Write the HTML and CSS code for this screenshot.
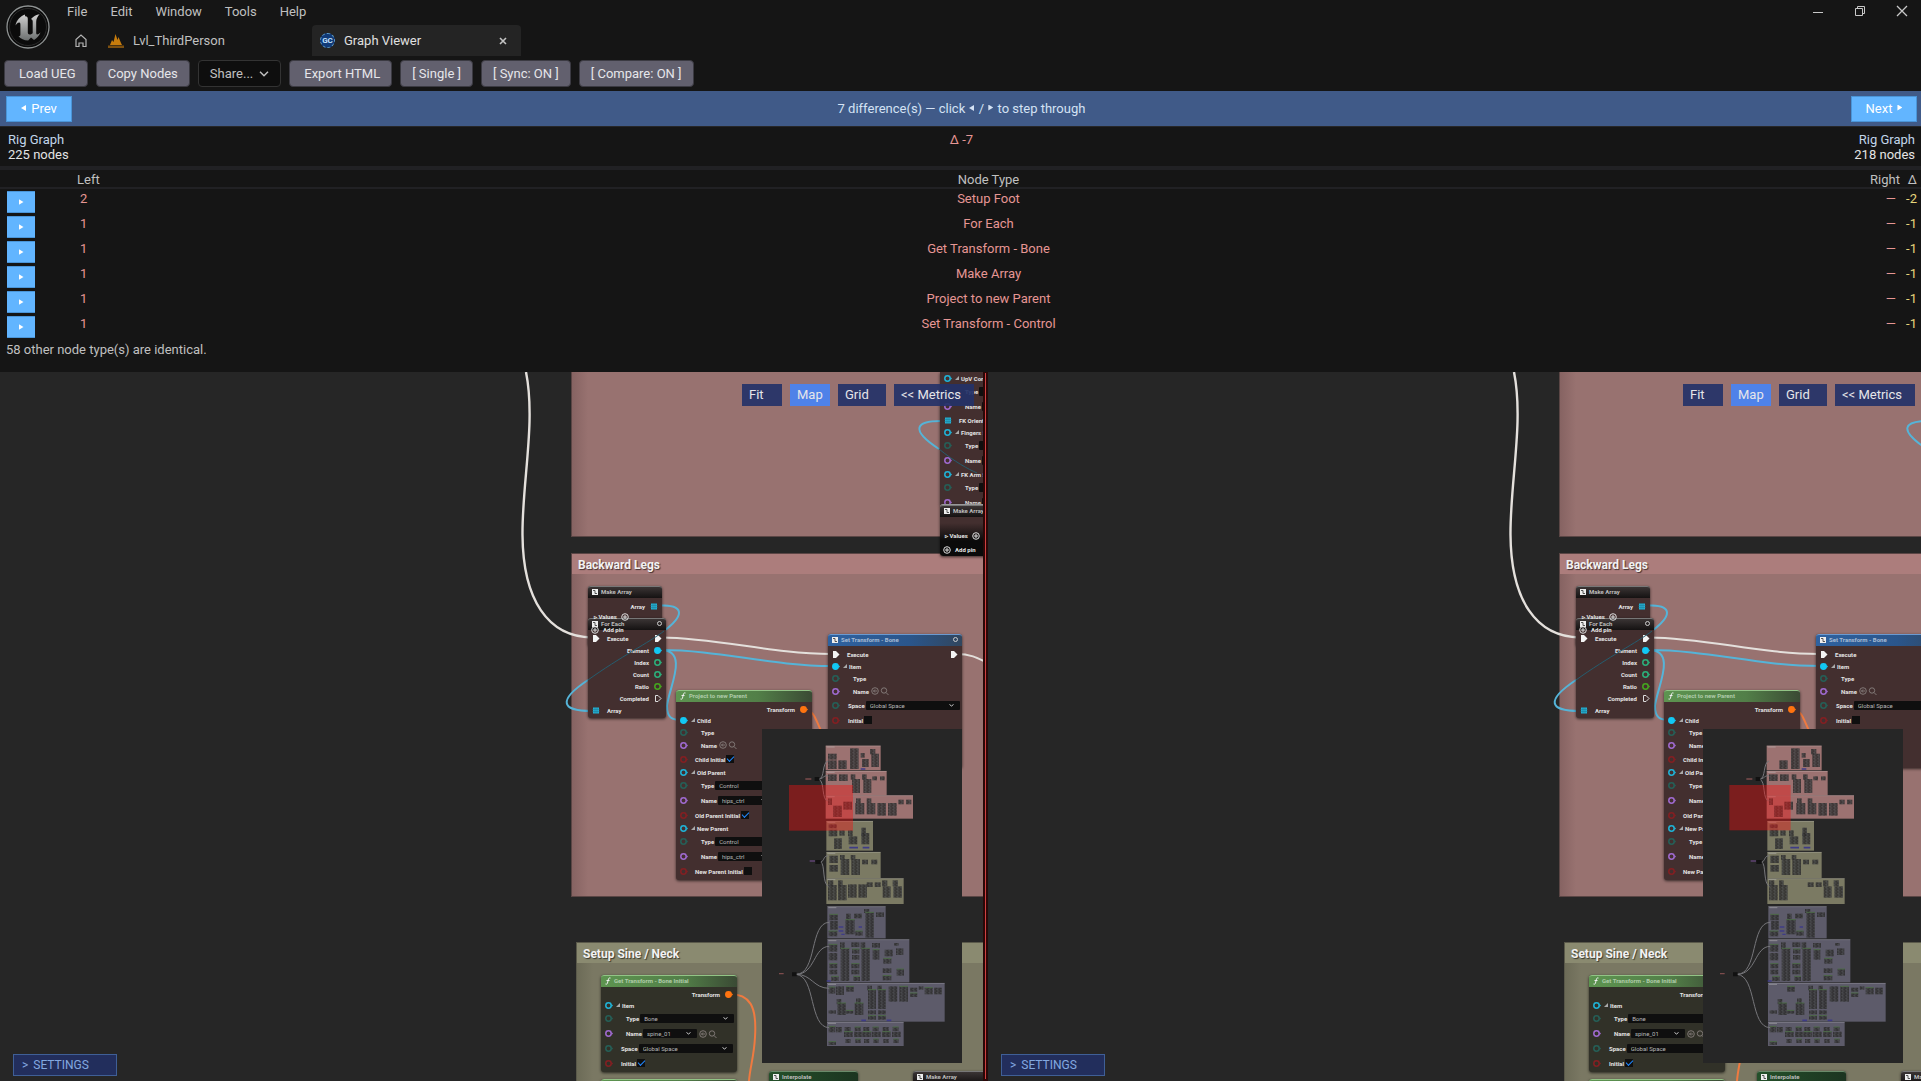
FILE: index.html
```html
<!DOCTYPE html>
<html lang="en">
<head>
<meta charset="utf-8">
<title>Graph Viewer</title>
<link rel="stylesheet" href="styles.css">
</head>
<body>
<header class="titlebar">
  <svg class="logo" viewBox="0 0 44 44" aria-hidden="true">
    <defs><linearGradient id="metal" x1="0" y1="0" x2="0" y2="1"><stop offset="0" stop-color="#d0d0d0"/><stop offset="1" stop-color="#6c7070"/></linearGradient></defs>
    <circle cx="22" cy="22" r="21" fill="#0b0b0b" stroke="#8f9393" stroke-width="1.3"/>
    <circle cx="22" cy="22" r="18.500" fill="none" stroke="#2a2a2a" stroke-width="1"/>
    <path fill="url(#metal)" d="M19 9.500c-5 2-8.500 5.500-9.500 11 1.300-2 2.800-3.200 3.800-3 .9.200 1.100.9 1.100 2.200v9.600c0 1.600-.6 2.100-1.900 1.900 2.200 2.700 5.500 4.200 9.700 4.200l2.800-2.800 3 2.300c3-1.500 5.200-3.900 6.500-7.300-1.600 1.500-2.700 2.100-3.500 1.900-.6-.2-.8-.8-.8-1.700V17c0-2.900 1.200-5.300 3.400-7.700-3.300.6-6.200 2-8.600 4.700 1.200.4 1.700 1.200 1.700 2.600v11.600c-1 .9-1.900 1.300-3 1.300-1.200 0-1.900-.6-1.900-1.900V13.800c0-1.800-.9-2.700-2.800-2.500.1-.6.100-1.200 0-1.800z"/>
  </svg>
  <div class="titlebar-main">
    <nav class="menu" aria-label="Main">
      <button class="menu-item">File</button>
      <button class="menu-item">Edit</button>
      <button class="menu-item">Window</button>
      <button class="menu-item">Tools</button>
      <button class="menu-item">Help</button>
    </nav>
    <div class="tabs">
      <button class="home" aria-label="Home"><svg viewBox="0 0 12 14"><path d="M1 12.500V5.500L6 1l5 4.500v7H8V9H4v3.500z" fill="none" stroke="#b4b4b4" stroke-width="1.200"/></svg></button>
      <button class="tab"><svg class="tab-icon" viewBox="0 0 16 14"><path d="M2 11L4 6l1.500 2L7.500 0l2 6 1-3L13 9l1 2z" fill="#c77c0c"/><path d="M0 11.500h16V14H0z" fill="#7d5010"/></svg><span>Lvl_ThirdPerson</span></button>
      <div class="tab tab--active">
        <span class="gc-badge">GC</span><span>Graph Viewer</span>
        <button class="tab-close" aria-label="Close tab"><svg viewBox="0 0 8 8"><path d="M1 1l6 6M7 1L1 7" stroke="#c4c4c4" stroke-width="1.600"/></svg></button>
      </div>
    </div>
  </div>
  <div class="window-controls">
    <button aria-label="Minimize"><svg viewBox="0 0 12 12"><path d="M1 7.500h10" stroke="#c8c8c8" fill="none"/></svg></button>
    <button aria-label="Restore"><svg viewBox="0 0 12 12"><path d="M1.500 3.500h7v7h-7zM3.500 3.500v-2h7v7h-2" stroke="#c8c8c8" fill="none"/></svg></button>
    <button aria-label="Close"><svg viewBox="0 0 12 12"><path d="M1 1l10 10M11 1L1 11" stroke="#c8c8c8" stroke-width="1.300" fill="none"/></svg></button>
  </div>
</header>

<div class="toolbar">
  <button class="tool tool--wide">Load UEG</button>
  <button class="tool">Copy Nodes</button>
  <button class="tool tool--menu">Share...<svg viewBox="0 0 10 6"><path d="M1 .8l4 4 4-4" fill="none" stroke="#c0c0c0" stroke-width="1.500"/></svg></button>
  <button class="tool tool--wide">Export HTML</button>
  <button class="tool">[ Single ]</button>
  <button class="tool">[ Sync: ON ]</button>
  <button class="tool">[ Compare: ON ]</button>
</div>

<div class="stepper">
  <button class="step"><i class="tri tri--left"></i>Prev</button>
  <p class="step-text">7 difference(s) — click <i class="tri tri--left"></i> / <i class="tri"></i> to step through</p>
  <button class="step step--next">Next<i class="tri"></i></button>
</div>

<section class="summary">
  <div><h2>Rig Graph</h2><p>225 nodes</p></div>
  <p class="delta">Δ -7</p>
  <div class="summary-right"><h2>Rig Graph</h2><p>218 nodes</p></div>
</section>

<section class="diff">
  <table>
    <thead><tr><th class="c-go"></th><th class="c-left">Left</th><th class="c-type">Node Type</th><th class="c-right">Right</th><th class="c-delta">Δ</th></tr></thead>
    <tbody>
      <tr><td class="c-go"><button class="go" aria-label="Go to Setup Foot"><i class="tri"></i></button></td><td class="c-left">2</td><td class="c-type">Setup Foot</td><td class="c-right">—</td><td class="c-delta">-2</td></tr>
      <tr><td class="c-go"><button class="go" aria-label="Go to For Each"><i class="tri"></i></button></td><td class="c-left">1</td><td class="c-type">For Each</td><td class="c-right">—</td><td class="c-delta">-1</td></tr>
      <tr><td class="c-go"><button class="go" aria-label="Go to Get Transform"><i class="tri"></i></button></td><td class="c-left">1</td><td class="c-type">Get Transform - Bone</td><td class="c-right">—</td><td class="c-delta">-1</td></tr>
      <tr><td class="c-go"><button class="go" aria-label="Go to Make Array"><i class="tri"></i></button></td><td class="c-left">1</td><td class="c-type">Make Array</td><td class="c-right">—</td><td class="c-delta">-1</td></tr>
      <tr><td class="c-go"><button class="go" aria-label="Go to Project to new Parent"><i class="tri"></i></button></td><td class="c-left">1</td><td class="c-type">Project to new Parent</td><td class="c-right">—</td><td class="c-delta">-1</td></tr>
      <tr><td class="c-go"><button class="go" aria-label="Go to Set Transform"><i class="tri"></i></button></td><td class="c-left">1</td><td class="c-type">Set Transform - Control</td><td class="c-right">—</td><td class="c-delta">-1</td></tr>
    </tbody>
  </table>
  <p class="diff-note">58 other node type(s) are identical.</p>
</section>

<main class="panes">
  <section class="pane pane--left" data-side="left">
    <div class="graph"></div>
    <div class="pane-actions">
      <button>Fit</button><button class="on">Map</button><button class="grid-btn">Grid</button><button class="metrics">&lt;&lt; Metrics</button>
    </div>
    <div class="minimap"></div>
    <button class="settings"><span>&gt;</span>SETTINGS</button>
  </section>
  <div class="splitter"></div>
  <section class="pane pane--right" data-side="right">
    <div class="graph"></div>
    <div class="pane-actions">
      <button>Fit</button><button class="on">Map</button><button class="grid-btn">Grid</button><button class="metrics">&lt;&lt; Metrics</button>
    </div>
    <div class="minimap"></div>
    <button class="settings"><span>&gt;</span>SETTINGS</button>
  </section>
</main>
<script src="graph.js"></script>
</body>
</html>
```

FILE: styles.css
```css
* { box-sizing: border-box; }
html, body { height: 100%; }
body {
  margin: 0;
  display: flex;
  flex-direction: column;
  overflow: hidden;
  background: #151515;
  color: #c0c0c0;
  font: 13px/16px Roboto, "Liberation Sans", sans-serif;
}
button, select, input { font: inherit; color: inherit; margin: 0; padding: 0; border: 0; border-radius: 0; }
button { background: none; white-space: nowrap; }
h2, p { margin: 0; font-size: 13px; font-weight: 400; }
svg { display: block; }

/* Title bar */
.titlebar { display: flex; height: 56px; flex: none; }
.logo { width: 44px; height: 44px; margin: 5px 0 0 6px; flex: none; }
.titlebar-main { flex: 1; padding-left: 17px; }
.menu { display: flex; gap: 23px; height: 25px; align-items: center; padding-bottom: 2px; }
.tabs { display: flex; height: 31px; }
.home { width: 12px; margin-left: 8px; }
.home svg { width: 12px; height: 14px; }
.tab { display: flex; align-items: center; gap: 9px; width: 204px; margin-left: 21px; text-align: left; }
.tab-icon { width: 16px; height: 14px; }
.tab--active { width: 209px; margin-left: 0; padding: 0 14px 0 8px; background: #242424; color: #e0e0e0; border-radius: 4px 4px 0 0; }
.tab-close { margin-left: auto; }
.tab-close svg { width: 8px; height: 8px; }
.gc-badge { width: 15px; height: 15px; border-radius: 8px; background: #103a78; border: 1px dashed #5d9ed0; color: #c4e4ff; font-size: 8px; line-height: 13px; font-weight: 700; text-align: center; }
.window-controls { display: flex; gap: 30px; padding: 5px 13px 0 0; align-items: flex-start; }
.window-controls svg { width: 12px; height: 12px; }

/* Toolbar */
.toolbar { display: flex; flex: none; gap: 8px; padding: 4px; height: 35px; }
.tool { height: 27px; padding: 0 11px; background: #62606e; border: 1px solid #3b3a42; border-radius: 4px; color: #e6e6ea; }
.tool--wide { padding-left: 14px; }
.tool--menu { display: flex; align-items: center; gap: 6px; background: #0e0e0e; border-color: #333; color: #c0c0c0; }
.tool--menu svg { width: 10px; height: 6px; }

.tri { display: inline-block; width: 5px; height: 6px; background: currentColor; clip-path: polygon(0 0, 100% 50%, 0 100%); vertical-align: 2px; }
.tri--left { transform: rotate(180deg); }

/* Difference stepper */
.stepper { display: flex; flex: none; justify-content: space-between; align-items: center; height: 35px; padding: 0 4px 0 6px; background: #405a88; color: #d4e2f4; }
.step { width: 66px; height: 26px; background: #62b5ff; color: #fff; border: 1px solid #4a95d8; }
.step .tri { margin-right: 5px; }
.step--next .tri { margin: 0 0 0 5px; }
.step-text .tri { margin: 0 1px; }

.summary { display: flex; flex: none; justify-content: space-between; height: 40px; padding: 5px 6px 0 8px; line-height: 15px; color: #e4e4e4; border-top: 1px solid #262628; }
.summary h2 { color: #c2d6ea; }
.summary-right { text-align: right; }
.delta { color: #e69694; }

/* Difference table */
.diff { flex: none; height: 206px; }
.diff table { width: 100%; table-layout: fixed; border-collapse: separate; border-spacing: 0; }
.diff th { height: 23px; padding: 1px 0 0; line-height: 15px; font-weight: 400; border-top: 4px solid #212124; border-bottom: 2px solid #212124; }
.diff td { height: 25px; padding: 2px 0 0; vertical-align: top; color: #e69694; }
.diff .c-go { width: 77px; text-align: left; }
.diff td.c-go { padding-left: 7px; }
.diff .c-left { width: 33px; text-align: left; }
.diff td.c-left { padding-left: 3px; }
.diff .c-type { text-align: center; }
.diff .c-right { width: 38px; text-align: right; padding-right: 5px; }
.diff td.c-right { padding-right: 9px; }
.diff .c-delta { width: 16px; text-align: right; padding-right: 4px; }
.diff td.c-delta { color: #e6d67c; }
.go { display: flex; width: 28px; height: 22px; align-items: center; justify-content: center; background: #62b5ff; color: #fff; border: 1px solid #4a95d8; border-width: 1px 0; }
.diff-note { padding: 3px 6px; }

/* Graph panes */
.panes { display: grid; grid-template-columns: 983fr 5px 933fr; flex: 1; min-height: 0; background: #262626; }
.pane { position: relative; overflow: hidden; min-width: 0; }
.splitter { background: #d04040; border: 2px solid #2a0808; border-top-width: 1px; }
.graph { position: absolute; inset: 0; overflow: hidden; }
.pane-actions { position: absolute; top: 12px; right: 6px; display: flex; gap: 8px; }
.pane--left .pane-actions { right: 9px; }
.pane-actions button { width: 40px; height: 22px; padding-left: 7px; text-align: left; font-size: 13px; color: #e6e6ea; background: rgba(36, 50, 104, 0.92); }
.pane-actions .on { background: #4f82e8; }
.pane-actions .grid-btn { width: 48px; }
.pane-actions .metrics { width: 80px; }
.minimap { position: absolute; right: 18px; bottom: 18px; width: 200px; height: 334px; background: #262626; }
.pane--left .minimap { right: 21px; }
.minimap svg { width: 200px; height: 334px; }
.settings { position: absolute; left: 13px; bottom: 5px; width: 104px; height: 22px; padding-left: 8px; display: flex; align-items: center; gap: 5px; background: #222e5c; border: 1px solid #3f5f96; color: #82a8e0; font-size: 12px; }

/* Comment boxes */
.comment { position: absolute; border: 1px solid #5b4645; background: linear-gradient(90deg, #866362, #987270 16px); }
.comment h3 { margin: 0; height: 20px; padding-left: 6px; background: #ac7d7c; color: #f2f2f2; font: 700 12px/22px Roboto, sans-serif; text-shadow: 1px 1px 1px #0009; }
.comment--olive { border-color: #5a594a; background: linear-gradient(90deg, #6c6b57, #7a7863 16px); }
.comment--olive h3 { background: #8a8a70; }

/* Nodes */
.wires { position: absolute; left: 0; top: 0; width: 100%; height: 100%; }
.node { position: absolute; padding: 0 3px 4px; background: #432f2f; border-radius: 3px; box-shadow: 0 1px 3px #000a; color: #e4e4e4; font: 700 6px/9px Roboto, sans-serif; }
.node--olive { background: #313128; }
.node--bare { border-radius: 0; }
.node--dark { background: linear-gradient(#432f2f 18px, #0a0a0a 36px); border-top: 1px solid #999; }
.node-head { display: flex; align-items: center; gap: 3px; height: 12px; margin: 0 -3px 2px; padding: 0 4px 2px; border-top: 1px solid #777; border-radius: 3px 3px 0 0; background: linear-gradient(#3a3434, #151212); color: #bcbcbc; white-space: nowrap; }
.node-head .icon { width: 6px; height: 6px; background: #eee; color: #222; flex: none; }
.node-head .fn { width: 6px; height: 8px; flex: none; }
.node-head .ring { width: 5px; height: 5px; border: 1px solid #ccc; border-radius: 50%; margin-left: auto; }
.head--blue { background: linear-gradient(90deg, #2f62a0, #2a568c 60%, #31465e); border-top-color: #6c9ad0; color: #a9bdd4; }
.head--green { background: linear-gradient(90deg, #5d9450, #527f48 60%, #3a4a34); border-top-color: #92c486; color: #b0ccaa; }
.head--deep { background: linear-gradient(90deg, #24502a, #1c3420); border-top-color: #6a8a6a; }
.row { display: flex; align-items: center; height: 12px; white-space: nowrap; }
.row--select { height: 15px; }
.row--icons, .row--check { height: 14px; }
.row--out { height: 10px; }
.row .right { margin-left: auto; display: flex; align-items: center; gap: 5px; padding-right: 1px; }
.pin { width: 8px; height: 7px; margin-left: 1px; margin-right: 7px; flex: none; }
.right .pin { margin: 0; }
.tick { width: 4px; height: 4px; margin: 0 2px 0 -4px; background: #aaa; clip-path: polygon(100% 0, 100% 100%, 0 100%); flex: none; }
.ind { padding-left: 6px; }
.half { padding-left: 1px; }
.box { position: relative; display: block; height: 9px; margin-left: 1px; flex: none; }
.box select { appearance: none; width: 100%; height: 9px; padding-left: 4px; background: #0f0f0f; border-radius: 1px; color: #b8b8b8; font-weight: 400; line-height: 9px; display: block; }
.box svg { position: absolute; right: 6px; top: 3px; width: 5px; height: 3px; }
.check { appearance: none; display: grid; place-items: center; width: 8px; height: 8px; margin-left: 1px; background: #0f0f0f; }
.check:checked::after { content: ""; width: 6px; height: 3px; margin-bottom: 2px; border: solid #2088ff; border-width: 0 0 1px 1px; transform: rotate(-45deg); }
.mini-icons { width: 18px; height: 8px; margin-left: 2px; }
.float { position: absolute; display: flex; align-items: center; gap: 4px; color: #e4e4e4; font: 700 6px/9px Roboto, sans-serif; white-space: nowrap; }
.float svg { width: 8px; height: 8px; }
```

FILE: graph.js
```js
const COLORS = { obj: '#1fb4d8', full: '#12c8f4', enum: '#256058', name: '#a06ad0', bool: '#841f22', int: '#2bb27c', float: '#45a81e', xf: '#ff7410' };

function pin(kind) {
  if (kind === 'exec') return '<svg class="pin" viewBox="0 0 8 7"><path d="M1 0h3l3.500 3.500L4 7H1z" fill="#f4f4f4"/></svg>';
  if (kind === 'execOff') return '<svg class="pin" viewBox="0 0 8 7"><path d="M1.500 .5H4l3 3-3 3H1.500z" fill="none" stroke="#ddd"/></svg>';
  if (kind === 'array') return '<svg class="pin" viewBox="0 0 8 7"><path d="M1 .5h6v6H1z" fill="#25b0d4"/><path d="M3 0v7M5 0v7M0 2.500h8M0 4.500h8" stroke="#1d7086" stroke-width=".4"/></svg>';
  const c = COLORS[kind];
  const fill = kind === 'full' || kind === 'xf' ? c : 'none';
  return '<svg class="pin" viewBox="0 0 8 7"><circle cx="3.500" cy="3.500" r="2.700" fill="' + fill + '" stroke="' + c + '" stroke-width="1.500"/><path d="M6.500 2l1.500 1.500L6.500 5z" fill="' + c + '"/></svg>';
}
const PLUS = '<svg viewBox="0 0 8 8"><circle cx="4" cy="4" r="3.300" fill="none" stroke="#ddd"/><path d="M4 2v4M2 4h4" stroke="#ddd"/></svg>';
const ICONS = '<svg class="mini-icons" viewBox="0 0 18 8"><g fill="none" stroke="#88807e" stroke-width=".9"><circle cx="4" cy="4" r="3.300"/><path d="M6 4H2.500M4 2.500L2.500 4 4 5.500"/><circle cx="13" cy="3.500" r="2.700"/><path d="M15 5.500L17.500 8"/></g></svg>';

/* Each row: p = left pin, t = label, tick = expander, sel = [value, width], chk = tick box, out = [label, pin] */
function row(r) {
  let type = r.sel ? ' row--select' : r.icons ? ' row--icons' : 'chk' in r ? ' row--check' : r.short ? ' row--out' : '';
  let s = '<div class="row' + type + '">';
  if (r.p) s += pin(r.p);
  if (r.tick) s += '<i class="tick"></i>';
  const cls = r.ind ? 'ind' : r.half ? 'half' : '';
  if (r.sel) s += '<span class="' + cls + '">' + r.t + '</span><span class="box" style="width:' + r.sel[1] + 'px"><select aria-label="' + r.t + '"><option>' + r.sel[0] + '</option></select><svg viewBox="0 0 5 3"><path d="M.5 .5l2 1.500 2-1.500" fill="none" stroke="#ccc"/></svg></span>';
  else if ('chk' in r) s += '<span class="' + cls + '">' + r.t + '</span><input class="check" type="checkbox" aria-label="' + r.t + '"' + (r.chk ? ' checked' : '') + '>';
  else if (r.t) s += '<span class="' + cls + '">' + r.t + '</span>';
  if (r.icons) s += ICONS;
  if (r.out) s += '<span class="right"><span>' + r.out[0] + '</span>' + pin(r.out[1]) + '</span>';
  return s + '</div>';
}
function node(n) {
  let s = '<article class="node ' + (n.cls || '') + '" style="left:' + n.x + 'px;top:' + n.y + 'px;width:' + n.w + 'px;height:' + n.h + 'px">';
  if (n.title) {
    const icon = n.fn ? '<svg class="fn" viewBox="0 0 6 8"><path d="M5.500 1C4 .5 3.500 1.500 3.200 3L2.500 6C2.200 7.200 1.500 7.400 .5 7M1.500 3.500h3" fill="none" stroke="#eee"/></svg>'
      : '<svg class="icon" viewBox="0 0 6 6"><path d="M1 1.500h2v3h2" fill="none" stroke="#333" stroke-width=".8"/></svg>';
    s += '<div class="node-head ' + (n.head || '') + '">' + icon + '<span>' + n.title + '</span>' + (n.ring ? '<i class="ring"></i>' : '') + '</div>';
  }
  return s + (n.rows || []).map(row).join('') + '</article>';
}

const hand = [
  { x: 940, y: 0, w: 100, h: 133, cls: 'node--bare', rows: [
    { p: 'obj', tick: 1, t: 'UpV Control' }, { p: 'enum', ind: 1, t: 'Type', sel: ['Control', 50] }, { p: 'name', ind: 1, t: 'Name', sel: ['None', 50] },
    { p: 'array', t: 'FK Orient' }, { p: 'obj', tick: 1, t: 'Fingers Settings' }, { p: 'enum', ind: 1, t: 'Type', sel: ['Control', 50] }, { p: 'name', ind: 1, t: 'Name', sel: ['None', 50] },
    { p: 'obj', tick: 1, t: 'FK Arm Settings' }, { p: 'enum', ind: 1, t: 'Type', sel: ['Control', 50] }, { p: 'name', ind: 1, t: 'Name', sel: ['None', 50] }] },
  { x: 940, y: 132, w: 100, h: 52, cls: 'node--dark', title: 'Make Array' }
];
const legs = [
  { x: 588, y: 214, w: 74, h: 60, title: 'Make Array', rows: [{ out: ['Array', 'array'] }] },
  { x: 588, y: 246, w: 78, h: 100, title: 'For Each', ring: 1, rows: [
    { p: 'exec', t: 'Execute', out: ['', 'exec'] }, { out: ['Element', 'full'] }, { out: ['Index', 'int'] }, { out: ['Count', 'int'] },
    { out: ['Ratio', 'float'] }, { out: ['Completed', 'execOff'] }, { p: 'array', t: 'Array' }] },
  { x: 828, y: 262, w: 134, h: 134, title: 'Set Transform - Bone', head: 'head--blue', ring: 1, rows: [
    { p: 'exec', t: 'Execute', out: ['', 'exec'] }, { p: 'full', tick: 1, t: 'Item' }, { p: 'enum', ind: 1, t: 'Type' }, { p: 'name', ind: 1, t: 'Name', icons: 1 },
    { p: 'enum', half: 1, t: 'Space', sel: ['Global Space', 94] }, { p: 'bool', half: 1, t: 'Initial', chk: 0 }] },
  { x: 676, y: 318, w: 136, h: 190, title: 'Project to new Parent', head: 'head--green', fn: 1, rows: [
    { short: 1, out: ['Transform', 'xf'] }, { p: 'full', tick: 1, t: 'Child' }, { p: 'enum', ind: 1, t: 'Type' }, { p: 'name', ind: 1, t: 'Name', icons: 1 },
    { p: 'bool', t: 'Child Initial', chk: 1 }, { p: 'obj', tick: 1, t: 'Old Parent' }, { p: 'enum', ind: 1, t: 'Type', sel: ['Control', 90] },
    { p: 'name', ind: 1, t: 'Name', sel: ['hips_ctrl', 54] }, { p: 'bool', t: 'Old Parent Initial', chk: 1 }, { p: 'obj', tick: 1, t: 'New Parent' },
    { p: 'enum', ind: 1, t: 'Type', sel: ['Control', 90] }, { p: 'name', ind: 1, t: 'Name', sel: ['hips_ctrl', 54] }, { p: 'bool', t: 'New Parent Initial', chk: 0 }] }
];
const neck = [
  { x: 601, y: 603, w: 136, h: 97, cls: 'node--olive', title: 'Get Transform - Bone Initial', head: 'head--green', fn: 1, rows: [
    { short: 1, out: ['Transform', 'xf'] }, { p: 'obj', tick: 1, t: 'Item' }, { p: 'enum', ind: 1, t: 'Type', sel: ['Bone', 94] },
    { p: 'name', ind: 1, t: 'Name', sel: ['spine_01', 54], icons: 1 }, { p: 'enum', half: 1, t: 'Space', sel: ['Global Space', 94] }, { p: 'bool', half: 1, t: 'Initial', chk: 1 }] },
  { x: 601, y: 707, w: 136, h: 30, cls: 'node--olive', title: ' ', head: 'head--green', fn: 1 },
  { x: 769, y: 699, w: 89, h: 30, cls: 'node--olive', title: 'Interpolate', head: 'head--deep' },
  { x: 913, y: 699, w: 89, h: 30, cls: 'node--olive', title: 'Make Array' }
];

/* Each wire: stroke colour, path, stroke width */
function wires(list) {
  return '<svg class="wires"><g fill="none">' + list.map(w => '<path d="' + w[1] + '" stroke="' + w[0] + '" stroke-width="' + (w[2] || 2) + '"/>').join('') + '</g></svg>';
}
const CY = '#55b4d8', WH = '#e4e0dc', OR = '#ef7a40', DIM = '#255c6e';
const under = [
  [WH, 'M526 0C536 50 522 110 522.500 163C523 228 548 265 592 265.500', 2.4],
  [CY, 'M656 233.500H664C684 234 684 244 664 259'],
  [CY, 'M588 308C558 328 560 339 592 339'],
  [CY, 'M661 278C720 278 770 294 832 294'],
  [CY, 'M661 278C690 278 668 318 667 334C667 346 672 348 682 348'],
  [WH, 'M661 265.500C720 266 770 282 832 282'],
  [WH, 'M956 282C970 282 976 285 990 292'],
  [OR, 'M804 337.500C816 338 816 352 825 366'],
  [OR, 'M729 622C750 622 757 634 755 665C754 685 750 695 749 709'],
  [CY, 'M945 49C914 48 910 58 939 77']
];
const over = [[DIM, 'M664 259C650 270 620 285 588 308', 1], [DIM, 'M939 77C955 90 968 97 977 101', 1]];

function comment(x, y, h, title, cls) {
  return '<div class="comment ' + cls + '" style="left:' + x + 'px;top:' + y + 'px;right:-4px;height:' + h + 'px">' + (title ? '<h3>' + title + '</h3>' : '') + '</div>';
}
function float(x, y, html) { return '<div class="float" style="left:' + x + 'px;top:' + y + 'px">' + html + '</div>'; }

const world = comment(571, -20, 185, '', '') + comment(571, 181, 344, 'Backward Legs', '') + comment(576, 570, 200, 'Setup Sine / Neck', 'comment--olive')
  + wires(under) + hand.concat(legs, neck).map(node).join('') + wires(over)
  + float(594, 240, '<span>▹ Values</span>' + PLUS) + float(591, 253, PLUS + '<span>Add pin</span>')
  + float(945, 159, '<span>▹ Values</span>' + PLUS) + float(943, 173, PLUS + '<span>Add pin</span>');

/* Minimap: comment areas [x, y, w, h, colour], then node blocks [x, y, w, h, missing on the right side] */
const PINK = '#9c7271', OLIVE = '#7b7a63', BLUE = '#5d5b6a';
const areas = [
  [197, 62, 165, 74, PINK], [197, 138, 183, 73, PINK], [197, 211, 262, 70, PINK],
  [199, 288, 140, 89, OLIVE], [199, 381, 163, 78, OLIVE], [199, 460, 232, 77, OLIVE],
  [202, 544, 175, 96, BLUE], [202, 643, 246, 129, BLUE], [201, 774, 353, 116, BLUE], [201, 891, 230, 72, BLUE]
];
const blocks = [
  [204, 86, 26, 18, 1], [204, 106, 26, 26, 1], [235, 106, 25, 26], [270, 70, 26, 62], [302, 84, 12, 14], [306, 102, 20, 24], [330, 72, 16, 16], [334, 86, 23, 40],
  [204, 148, 26, 20], [237, 148, 26, 20], [272, 148, 14, 16], [276, 162, 24, 42], [306, 148, 14, 16], [310, 162, 24, 42], [337, 154, 14, 12], [360, 154, 14, 12],
  [204, 220, 12, 20], [219, 242, 27, 34], [250, 230, 26, 24], [288, 220, 14, 14], [286, 234, 27, 34], [320, 220, 14, 14], [320, 234, 26, 34], [352, 234, 26, 38], [384, 234, 26, 38], [415, 224, 16, 14], [438, 224, 16, 14],
  [206, 298, 24, 12], [206, 314, 26, 20], [238, 316, 16, 16], [222, 340, 24, 32], [264, 316, 14, 18], [266, 334, 26, 24], [304, 308, 14, 26], [304, 324, 24, 34],
  [208, 392, 26, 22], [208, 420, 26, 20], [240, 390, 14, 14], [242, 402, 26, 48], [272, 390, 14, 14], [274, 402, 26, 48], [306, 404, 18, 14], [334, 404, 18, 14],
  [204, 466, 16, 18], [204, 480, 26, 46], [234, 466, 14, 18], [234, 480, 26, 46], [264, 478, 26, 40, 1], [295, 478, 26, 40, 1], [320, 472, 18, 14], [344, 472, 18, 14], [366, 466, 16, 18], [368, 484, 24, 34], [398, 466, 16, 18], [400, 484, 26, 34],
  [208, 568, 26, 18], [210, 588, 24, 26], [206, 618, 26, 16], [258, 566, 14, 18], [256, 584, 28, 44], [282, 566, 24, 14], [286, 618, 22, 14], [312, 552, 16, 12], [316, 562, 26, 76], [348, 562, 24, 14],
  [206, 658, 26, 22], [206, 684, 26, 22], [208, 716, 24, 14], [208, 734, 24, 14], [214, 754, 22, 14], [240, 652, 14, 20], [242, 670, 26, 98], [274, 652, 24, 14], [276, 672, 22, 14], [276, 690, 22, 14], [274, 716, 24, 14], [274, 734, 24, 14], [280, 754, 20, 14], [302, 652, 14, 20], [304, 670, 26, 98], [336, 654, 24, 14], [338, 674, 20, 30], [374, 674, 24, 20], [370, 700, 24, 16], [368, 730, 26, 14], [368, 752, 26, 14], [408, 670, 22, 20], [410, 732, 22, 20], [402, 654, 14, 8],
  [206, 786, 20, 20, 1], [228, 784, 24, 26, 1], [258, 784, 24, 16], [230, 822, 14, 16], [232, 834, 26, 36], [206, 856, 22, 10], [258, 856, 22, 10], [288, 820, 14, 16], [284, 834, 26, 36], [322, 782, 14, 14], [324, 794, 24, 58], [352, 782, 14, 14], [354, 794, 24, 58], [324, 856, 24, 12], [324, 872, 24, 12], [354, 856, 24, 12], [354, 872, 24, 12], [386, 784, 26, 46], [418, 784, 26, 46], [450, 788, 22, 12], [450, 804, 22, 12], [476, 784, 14, 10], [494, 788, 24, 20], [522, 788, 24, 20],
  [206, 904, 20, 18], [228, 906, 18, 16], [206, 950, 22, 10]
];
[252, 282, 308, 336, 366, 396].forEach(x => blocks.push([x + 2, 906, 18, 12], [x, 920, 26, 16], [x + 4, 942, 16, 12]));

function minimap(right) {
  const view = right ? [85, 180, 184, 136] : [87, 180, 192, 137];
  const id = right ? 'tr' : 'tl';
  let s = '<svg viewBox="6 12 600 1002" preserveAspectRatio="none" role="img" aria-label="Graph overview"><defs><pattern id="' + id + '" width="12" height="9" patternUnits="userSpaceOnUse"><rect width="12" height="9" fill="#2c2b2b"/><path d="M1 2h6M3 6h7" stroke="#5a5e62" stroke-width="1.800"/></pattern></defs>';
  s += areas.map(a => '<rect x="' + a[0] + '" y="' + a[1] + '" width="' + a[2] + '" height="' + a[3] + '" fill="' + a[4] + '"/><path d="M' + a[0] + ' ' + (a[1] + 1) + 'h' + a[2] + '" stroke="#fff" stroke-opacity=".18" stroke-width="3"/><path d="M' + (a[0] + 3) + ' ' + (a[1] + 4) + 'h24" stroke="#bbb" stroke-opacity=".5" stroke-width="3"/>').join('');
  s += blocks.filter(b => !(right && b[4])).map((b, i) => '<rect x="' + b[0] + '" y="' + b[1] + '" width="' + b[2] + '" height="' + b[3] + '" fill="url(#' + id + ')" fill-opacity=".84"/>' + (b[1] > 560 && i % 2 ? '<path d="M' + b[0] + ' ' + b[1] + 'h' + b[2] + '" stroke="#4d6a48" stroke-width="3"/>' : '')).join('');
  s += '<g fill="none" stroke="#77777b" stroke-width="3"><path d="M178 162C194 160 186 112 204 108M178 162C192 160 188 152 204 152M178 164C194 170 184 226 204 228M182 411C194 408 188 394 204 392M182 411C196 416 186 478 206 484"/><path d="M108 748C172 748 148 592 208 592M108 748C166 748 160 664 208 664'
    + (right ? '' : 'M108 748C156 748 160 790 208 790') + 'M108 748C168 752 146 908 208 908"/></g>';
  s += '<g fill="#111"><path d="M164 156h14v12h-14zM166 405h16v12h-16zM96 742h14v12H96z"/></g><g stroke-width="4"><path d="M136 162h18M57 746h14" stroke="#7d4c4c"/><path d="M149 408h16" stroke="#66477c"/></g>';
  s += '<path d="M296 606h10M200 768h12M304 886h14M380 886h14M302 132h14M268 368h26M308 368h20" stroke="#3f3c86" stroke-width="5"/><path d="M236 618h14M236 606h14M244 628h10" stroke="#3f3c86" stroke-width="4"/>';
  s += '<rect x="' + view[0] + '" y="' + view[1] + '" width="' + view[2] + '" height="' + view[3] + '" fill="#f01414" fill-opacity=".42"/></svg>';
  return s;
}

document.querySelectorAll('.pane').forEach(p => {
  p.querySelector('.graph').innerHTML = world;
  p.querySelector('.minimap').innerHTML = minimap(p.dataset.side === 'right');
});
```
